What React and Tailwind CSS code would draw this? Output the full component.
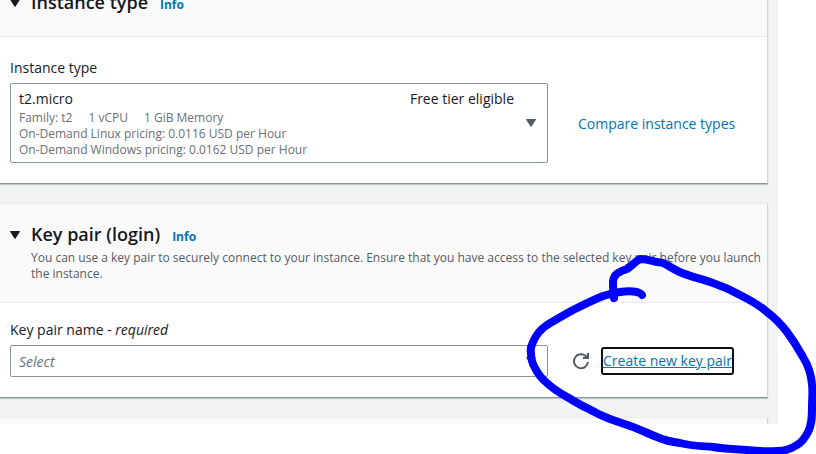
import React from "react";

function Caret({ className }) {
  return (
    <svg viewBox="0 0 10 8" className={`w-[10px] h-2 shrink-0 ${className}`} aria-hidden="true">
      <path d="M0.5 0.5h9L5 7.5z" fill="currentColor" stroke="currentColor" strokeLinejoin="round" />
    </svg>
  );
}

function Card({ title, description, children }) {
  return (
    <section className="min-h-6 bg-[#fafafa] border-t border-t-[#eaeded] border-r border-r-[#d0d5d5] border-b border-b-[#879596] shadow-[0_1px_1px_rgba(0,28,36,0.2)]">
      {title && (
        <header className={`flex border-b border-[#eaeded] pl-[10px] pr-1 ${description ? "pt-[17px] pb-5" : "pt-4 pb-5"}`}>
          <Caret className="mt-[10px] mr-[11px] text-[#16191f]" />
          <div>
            <div className="flex items-baseline gap-3">
              <h2 className="text-[18px] leading-[27px] font-semibold">{title}</h2>
              <a href="#info" className="text-[12px] leading-4 font-bold text-[#0073bb]">Info</a>
            </div>
            {description && <p className="mt-[2px] text-[12px] leading-4 text-[#545b64]">{description}</p>}
          </div>
        </header>
      )}
      {children}
    </section>
  );
}

function Scribble() {
  return (
    <svg viewBox="0 0 816 454" width="816" height="454" className="absolute top-0 left-0 pointer-events-none" aria-hidden="true">
      <path
        d="M614 298C613 292 613 286 613 281C614 276 617 273 620 272C622 270 625 270 627 269C632 266 636 260 641 259C646 259 652 261 657 262C661 262 664 263 667 265C672 268 677 271 682 273C692 277 702 279 713 283C722 286 731 290 740 295C750 300 759 305 767 312C775 318 781 324 787 332C793 340 798 348 803 357C808 365 811 374 812 384C813 392 812 399 812 407C812 416 812 425 808 432C805 438 802 442 797 445C791 449 784 451 777 451C767 452 757 451 747 450C736 449 725 449 713 447C702 446 691 446 680 443C672 442 664 440 657 437C649 434 641 430 633 427C625 424 618 422 610 419C602 416 594 412 587 408C580 405 574 401 567 397C560 393 553 389 547 383C542 379 538 374 535 368C532 363 531 358 531 353C530 349 531 346 533 342C536 335 541 329 547 325C555 320 564 315 573 310C583 305 593 300 603 296C609 294 614 293 620 292C626 291 632 291 637 292C639 293 641 293 642 295"
        fill="none"
        stroke="#0000ff"
        strokeWidth="8"
        strokeLinecap="round"
        strokeLinejoin="round"
      />
    </svg>
  );
}

export default function App() {
  return (
    <div className="relative bg-white pb-[30px] overflow-hidden font-['Open_Sans',sans-serif] text-[#16191f]">
      <main className="mr-[38px] h-[424px] overflow-hidden bg-[#f2f3f3] pr-[10px]">
        <div className="-mt-7 flex flex-col gap-[19px]">
          <Card title="Instance type">
            <div className="bg-white pl-[10px] pt-5 pb-5 text-[14px]">
              <label id="type-label" htmlFor="type" className="block leading-[22px] mb-1">Instance type</label>
              <div className="flex items-center">
                <button id="type" type="button" aria-haspopup="listbox" aria-labelledby="type-label type" className="flex items-center w-[538px] h-20 shrink-0 rounded-[2px] border border-[#879596] bg-white pl-2 pr-[11px] text-left">
                  <span className="grow">
                    <span className="flex justify-between pr-3 leading-[22px]">
                      <span>t2.micro</span>
                      <span>Free tier eligible</span>
                    </span>
                    <span className="block text-[12px] leading-4 text-[#687078]">
                      <span className="flex gap-4">
                        <span>Family: t2</span>
                        <span>1 vCPU</span>
                        <span>1 GiB Memory</span>
                      </span>
                      <span className="block">On-Demand Linux pricing: 0.0116 USD per Hour</span>
                      <span className="block">On-Demand Windows pricing: 0.0162 USD per Hour</span>
                    </span>
                  </span>
                  <Caret className="text-[#545b64]" />
                </button>
                <a href="#compare" className="ml-[30px] whitespace-nowrap text-[#0073bb]">Compare instance types</a>
              </div>
            </div>
          </Card>

          <Card
            title="Key pair (login)"
            description="You can use a key pair to securely connect to your instance. Ensure that you have access to the selected key pair before you launch the instance."
          >
            <div className="bg-white pl-[10px] pt-4 pb-5 text-[14px]">
              <label htmlFor="key" className="block leading-[22px] mb-1">
                Key pair name - <em>required</em>
              </label>
              <div className="flex items-center">
                <div className="grid items-center w-[538px] shrink-0">
                  <select id="key" defaultValue="" className="col-start-1 row-start-1 appearance-none w-full h-8 rounded-[2px] border border-[#879596] bg-white px-2 italic text-[#687078]">
                    <option value="">Select</option>
                  </select>
                  <Caret className="col-start-1 row-start-1 justify-self-end mr-3 text-[#545b64] pointer-events-none" />
                </div>
                <button type="button" aria-label="Refresh" className="ml-[25px] text-[#545b64]">
                  <svg viewBox="0 0 16 16" className="block w-4 h-4" fill="none" stroke="currentColor" strokeWidth="2" aria-hidden="true">
                    <path d="M15 9A7 7 0 1 1 12.5 2.8L15 5" />
                    <path d="M15 0v5H10" />
                  </svg>
                </button>
                <a href="#create" className="ml-3 rounded-[3px] border-2 border-[#0f1114] leading-6 whitespace-nowrap text-[#0073bb] underline">Create new key pair</a>
              </div>
            </div>
          </Card>

          <Card />
        </div>
      </main>
      <Scribble />
    </div>
  );
}
